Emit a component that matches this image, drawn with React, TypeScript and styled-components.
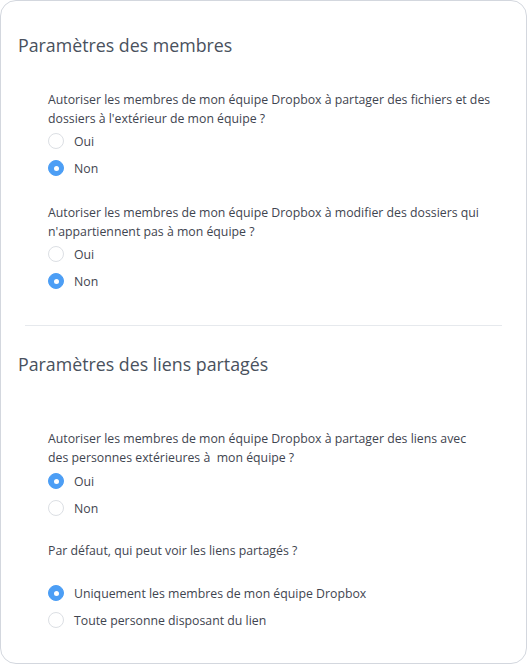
import styled, { createGlobalStyle } from 'styled-components';

const GlobalStyle = createGlobalStyle`
  html, body { margin: 0; padding: 0; background: #ffffff; }
  body { font-family: "Open Sans", "Noto Sans", sans-serif; -webkit-font-smoothing: antialiased; }
`

const Card = styled.div`
  box-sizing: border-box;
  width: 527px;
  height: 664px;
  border: 1px solid #d3d7de;
  border-radius: 16px;
  background: #fff;
`

const Section = styled.section<{ $top: number }>`
  padding-top: ${p => p.$top}px;
`

const Title = styled.h2`
  margin: 0 0 0 17px;
  font-size: 17.8px;
  font-weight: 400;
  line-height: 24px;
  color: #49515d;
`

const Questions = styled.div<{ $top: number }>`
  padding: ${p => p.$top}px 0 0 47px;
  display: flex;
  flex-direction: column;
`

const Question = styled.div<{ $gap: number }>`
  margin-bottom: ${p => p.$gap}px;
`

const Label = styled.p<{ $after: number; $width: number }>`
  margin: 0 0 ${p => p.$after}px;
  font-size: 12.3px;
  line-height: 19px;
  color: #3f4550;
  max-width: ${p => p.$width}px;
  white-space: pre-wrap;
`

const Options = styled.div`
  display: flex;
  flex-direction: column;
  gap: 9px;
`

const Option = styled.label`
  display: flex;
  align-items: center;
  gap: 10px;
  height: 18px;
  font-size: 12.3px;
  color: #3f4550;
  cursor: pointer;
`

const Radio = styled.span<{ $on: boolean }>`
  box-sizing: border-box;
  width: 16px;
  height: 16px;
  border-radius: 50%;
  flex: none;
  display: flex;
  align-items: center;
  justify-content: center;
  border: 1px solid ${p => (p.$on ? '#4c9ef5' : '#dcdfe4')};
  background: ${p => (p.$on ? '#4c9ef5' : '#fff')};
  &::after {
    content: '';
    width: 5px;
    height: 5px;
    border-radius: 50%;
    background: #fff;
    display: ${p => (p.$on ? 'block' : 'none')};
  }
`

const Divider = styled.hr`
  margin: 0 24px 0 24px;
  border: 0;
  border-top: 1px solid #e6e9ed;
`

type Q = { text: string; options: string[]; selected: number; after: number; gap: number; width: number }

const members: Q[] = [
  {
    text: "Autoriser les membres de mon équipe Dropbox à partager des fichiers et des dossiers à l'extérieur de mon équipe ?",
    options: ['Oui', 'Non'],
    selected: 1,
    after: 4,
    gap: 26,
    width: 460,
  },
  {
    text: "Autoriser les membres de mon équipe Dropbox à modifier des dossiers qui n'appartiennent pas à mon équipe ?",
    options: ['Oui', 'Non'],
    selected: 1,
    after: 4,
    gap: 0,
    width: 460,
  },
]

const links: Q[] = [
  {
    text: 'Autoriser les membres de mon équipe Dropbox à partager des liens avec des personnes extérieures à  mon équipe ?',
    options: ['Oui', 'Non'],
    selected: 0,
    after: 5,
    gap: 24,
    width: 436,
  },
  {
    text: 'Par défaut, qui peut voir les liens partagés ?',
    options: ['Uniquement les membres de mon équipe Dropbox', 'Toute personne disposant du lien'],
    selected: 0,
    after: 24,
    gap: 0,
    width: 460,
  },
]

const QuestionBlock = ({ q }: { q: Q }) => (
  <Question $gap={q.gap}>
    <Label $after={q.after} $width={q.width}>{q.text}</Label>
    <Options>
      {q.options.map((o, i) => (
        <Option key={o}>
          <Radio $on={i === q.selected} />
          {o}
        </Option>
      ))}
    </Options>
  </Question>
)

const App = () => (
  <>
    <GlobalStyle />
    <Card>
      <Section $top={32}>
        <Title>Paramètres des membres</Title>
        <Questions $top={33}>
          {members.map(q => <QuestionBlock key={q.text} q={q} />)}
        </Questions>
      </Section>
      <Section $top={35}>
        <Divider />
      </Section>
      <Section $top={26}>
        <Title>Paramètres des liens partagés</Title>
        <Questions $top={53}>
          {links.map(q => <QuestionBlock key={q.text} q={q} />)}
        </Questions>
      </Section>
    </Card>
  </>
)

export default App
